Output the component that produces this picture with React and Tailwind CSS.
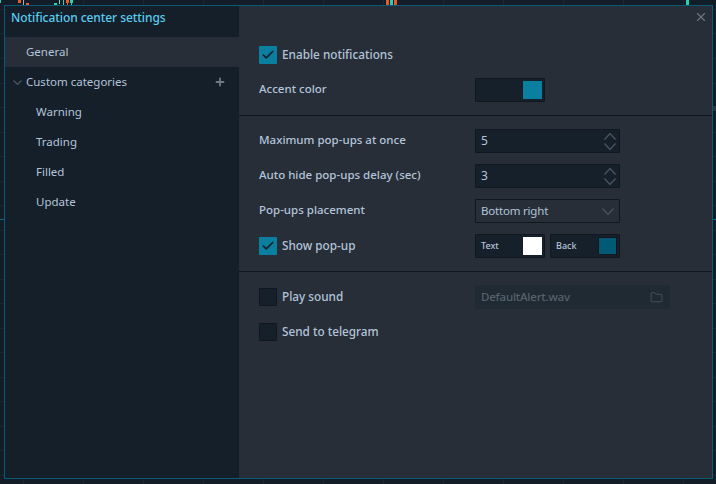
import React from 'react';
import { Check, Folder, Plus, X } from 'lucide-react';

const teal = '#2bcfb0';
const orange = '#e9592b';

const candles = [
  [0, 0, 1, 3, teal], [18, 0, 3, 3, orange], [23, 0, 1, 5, '#9fb4b8'], [26, 3, 3, 2, orange],
  [54, 3, 3, 2, teal], [59, 0, 1, 4, '#8fcabc'], [63, 0, 1, 5, teal], [66, 0, 3, 3, orange],
  [67, 3, 1, 2, orange], [70, 0, 3, 3, teal], [71, 3, 1, 2, teal],
  [386, 0, 3, 5, orange], [390, 0, 3, 5, teal], [394, 0, 3, 5, orange], [686, 0, 3, 5, teal],
];

const ChartBackdrop = () => (
  <svg className="absolute inset-0" width="716" height="484">
    {[23, 83, 143, 203, 263, 323, 383, 443, 503, 563, 623, 683].map((x) => (
      <rect key={x} x={x} y="0" width="1" height="484" fill="#1b2632" />
    ))}
    {[9, 33, 58, 83, 107, 132, 156, 181, 205, 230, 254, 279, 303, 328, 352, 377, 401, 426, 450, 475].map((y) => (
      <rect key={y} x="0" y={y} width="716" height="1" fill="#1b2632" />
    ))}
    <rect x="0" y="219" width="716" height="1" fill="#0d6a80" />
    <rect x="713" y="106" width="3" height="5" fill="#2b343e" />
    {candles.map(([x, y, w, h, c], i) => (
      <rect key={i} x={x} y={y} width={w} height={h} fill={c} />
    ))}
  </svg>
);

// thin chevron, the lucide one is too small and tall here
const Chevron = ({ up, w = 11, h = 6, className }) => (
  <svg width={w + 1} height={h + 1} viewBox={`0 0 ${w + 1} ${h + 1}`} fill="none" stroke="currentColor" strokeWidth="1.2" className={className}>
    <polyline points={up ? `0.5,${h + 0.5} ${w / 2 + 0.5},0.5 ${w + 0.5},${h + 0.5}` : `0.5,0.5 ${w / 2 + 0.5},${h + 0.5} ${w + 0.5},0.5`} />
  </svg>
);

const Checkbox = ({ checked }) => (
  <div
    className={
      checked
        ? 'w-[18px] h-[18px] rounded-[1px] bg-[#0a7f9f] flex items-center justify-center shrink-0'
        : 'w-[18px] h-[18px] rounded-[1px] bg-[#16202b] border border-[#10171f] shrink-0'
    }
  >
    {checked && <Check size={14} strokeWidth={3} className="text-[#14202c]" />}
  </div>
);

const Label = ({ children }) => <span className="text-[11.5px] font-medium text-[#b3c4d8]">{children}</span>;
const CheckLabel = ({ children }) => <span className="text-[11.75px] font-medium text-[#b3c4d8]">{children}</span>;

const Row = ({ label, children }) => (
  <div className="flex items-center h-6">
    <div className="w-[216px] shrink-0 flex items-center pb-[2px]">
      <Label>{label}</Label>
    </div>
    {children}
  </div>
);

const NumberInput = ({ value }) => (
  <div className="w-[145px] h-6 flex items-center justify-between pl-[5px] pr-[3px] rounded-[1px] bg-[#16202b] border border-[#10171f]">
    <span className="text-[12px] text-[#b3c4d8]">{value}</span>
    <div className="flex flex-col gap-[3px] text-[#4b5764]">
      <Chevron up />
      <Chevron />
    </div>
  </div>
);

const Swatch = ({ label, color }) => (
  <div className="w-[70px] h-6 flex items-center justify-between pl-[5px] pr-[2px] rounded-[1px] bg-[#16202b] border border-[#10171f]">
    <span className="text-[9px] font-medium text-[#b3c4d8]">{label}</span>
    <div className={`w-[19px] h-[18px] ${color}`} />
  </div>
);

const SideItem = ({ children, active, indent }) => (
  <div
    className={`h-[30px] flex items-center text-[11.5px] text-[#b3c4d8] ${active ? 'bg-[#272e38]' : ''} ${
      indent ? 'pl-[31px]' : 'pl-[21px]'
    }`}
  >
    {children}
  </div>
);

export default function App() {
  return (
    <div
      className="relative w-[716px] h-[484px] overflow-hidden bg-[#131d28] pt-[5px] pl-[4px]"
      style={{ fontFamily: '"Noto Sans", sans-serif' }}
    >
      <ChartBackdrop />
      <div className="relative w-[709px] h-[474px] flex border border-[#0a5a75] bg-[#272e38]">
        {/* Sidebar */}
        <aside className="w-[234px] shrink-0 bg-[#151f2a]">
          <div className="h-[31px] pl-[6px] pb-[8px] flex items-center text-[12px] tracking-[-0.07px] font-medium text-[#58cdf0]">
            Notification center settings
          </div>
          <SideItem active>General</SideItem>
          <div className="relative">
            <SideItem>Custom categories</SideItem>
            <Chevron w={8} h={4} className="absolute left-[8px] top-[13px] text-[#4b5764]" />
            <Plus size={12} strokeWidth={3.6} className="absolute left-[209px] top-[9px] text-[#6f7b88]" />
          </div>
          <SideItem indent>Warning</SideItem>
          <SideItem indent>Trading</SideItem>
          <SideItem indent>Filled</SideItem>
          <SideItem indent>Update</SideItem>
        </aside>

        {/* Settings */}
        <main className="relative flex-1">
          <X size={14} strokeWidth={2} className="absolute right-[4px] top-[4px] text-[#6b7480]" />

          <section className="pt-[37px] pb-[13px] pl-5 flex flex-col gap-[11px] border-b border-[#10171f]">
            <div className="h-6 flex items-center gap-[5px]">
              <Checkbox checked />
              <CheckLabel>Enable notifications</CheckLabel>
            </div>
            <Row label="Accent color">
              <div className="w-[70px] h-6 flex items-center justify-end pr-[2px] rounded-[1px] bg-[#16202b] border border-[#10171f]">
                <div className="w-[19px] h-[18px] bg-[#0a7f9f]" />
              </div>
            </Row>
          </section>

          <section className="pt-[13px] pb-[13px] pl-5 flex flex-col gap-[11px] border-b border-[#10171f]">
            <Row label="Maximum pop-ups at once">
              <NumberInput value="5" />
            </Row>
            <Row label="Auto hide pop-ups delay (sec)">
              <NumberInput value="3" />
            </Row>
            <Row label="Pop-ups placement">
              <div className="w-[145px] h-6 flex items-center justify-between pl-[5px] pr-[5px] rounded-[1px] border border-[#10171f]">
                <span className="text-[11.5px] tracking-[-0.2px] text-[#b3c4d8]">Bottom right</span>
                <Chevron className="text-[#4b5764]" />
              </div>
            </Row>
            <div className="flex items-center h-6">
              <div className="w-[216px] shrink-0 flex items-center gap-[5px]">
                <Checkbox checked />
                <CheckLabel>Show pop-up</CheckLabel>
              </div>
              <div className="flex gap-[5px]">
                <Swatch label="Text" color="bg-white" />
                <Swatch label="Back" color="bg-[#015a75] border border-[#10171f]" />
              </div>
            </div>
          </section>

          <section className="pt-[13px] pl-5 flex flex-col gap-[11px]">
            <div className="flex items-center h-6">
              <div className="w-[216px] shrink-0 flex items-center gap-[5px]">
                <Checkbox />
                <CheckLabel>Play sound</CheckLabel>
              </div>
              <div className="w-[195px] h-6 flex items-center justify-between pl-[6px] pr-[7px] rounded-[1px] bg-[#202a33]">
                <span className="text-[11.5px] tracking-[-0.2px] font-medium text-[#56626e]">DefaultAlert.wav</span>
                <Folder size={13} strokeWidth={1.3} className="text-[#56626e]" />
              </div>
            </div>
            <div className="h-6 flex items-center gap-[5px]">
              <Checkbox />
              <CheckLabel>Send to telegram</CheckLabel>
            </div>
          </section>
        </main>
      </div>
    </div>
  );
}
